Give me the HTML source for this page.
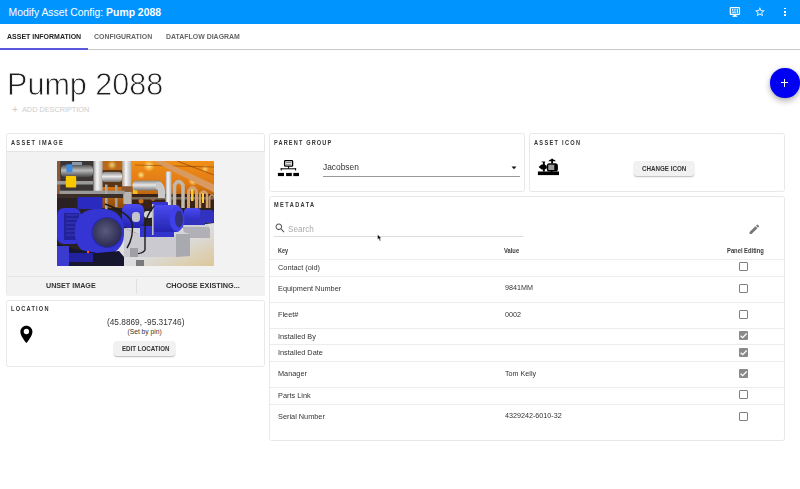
<!DOCTYPE html>
<html><head><meta charset="utf-8">
<style>
*{margin:0;padding:0;box-sizing:border-box}
html,body{width:800px;height:489px;overflow:hidden;background:#fff;font-family:"Liberation Sans",sans-serif;position:relative}
.a{position:absolute;white-space:nowrap;line-height:1}
.card{position:absolute;border:1px solid #e8e8e8;border-radius:2.5px;background:#fff}
.btn{position:absolute;background:#f1f1f1;border-radius:3px;box-shadow:0 1px 1.5px rgba(0,0,0,.28)}
.hr{position:absolute;left:270px;width:514px;height:1px;background:#ececec}
.cb{position:absolute;left:739px;width:9.2px;height:9.2px;border:1.15px solid #808080;border-radius:1px}
.cbc{position:absolute;left:739px;width:9.2px;height:9.2px;background:#8a8a8a;border-radius:1px}
</style></head><body>
<div class="a" style="left:0px;top:0px;width:800px;height:24px;background:#0094ff;"></div>
<div class="a" style="left:8.5px;top:7.6px;font-size:10.4px;color:#fff;">Modify Asset Config: <b>Pump 2088</b></div>
<svg class="a" style="left:729px;top:6px" width="12" height="12" viewBox="0 0 12 12"><rect x="1.3" y="1.7" width="9.2" height="6.6" rx="0.6" fill="none" stroke="#fff" stroke-width="1.2"/><rect x="3" y="3.2" width="1.4" height="1.4" fill="#fff"/><rect x="5.2" y="3.2" width="1.4" height="1.4" fill="#fff"/><rect x="7.8" y="3" width="1.2" height="4" fill="#fff"/><rect x="2.8" y="5.6" width="4.2" height="1.1" fill="#fff"/><rect x="4.5" y="8.6" width="2.8" height="1.6" fill="#fff"/><rect x="3.5" y="9.8" width="4.8" height="1" fill="#fff"/></svg>
<svg class="a" style="left:754px;top:6.3px" width="11.8" height="11.8" viewBox="0 0 24 24"><path fill="#fff" d="M22 9.24l-7.19-.62L12 2 9.19 8.63 2 9.24l5.46 4.73L5.82 21 12 17.27 18.18 21l-1.63-7.03L22 9.24zM12 15.4l-3.76 2.27 1-4.28-3.32-2.88 4.38-.38L12 6.1l1.71 4.04 4.38.38-3.32 2.88 1 4.28L12 15.4z"/></svg>
<div class="a" style="left:784px;top:7.7px;width:2px;height:1.8px;background:#fff;"></div>
<div class="a" style="left:784px;top:10.9px;width:2px;height:1.8px;background:#fff;"></div>
<div class="a" style="left:784px;top:14.1px;width:2px;height:1.8px;background:#fff;"></div>
<div class="a" style="left:0px;top:49px;width:800px;height:1px;background:#c8c8c8;"></div>
<div class="a" style="left:0px;top:48px;width:88px;height:2px;background:#5a58dc;"></div>
<div class="a" style="left:7px;top:33px;font-size:7.2px;color:#222;font-weight:bold;transform:scaleX(0.974);transform-origin:0 0;">ASSET INFORMATION</div>
<div class="a" style="left:94.4px;top:33px;font-size:7.2px;color:#666;font-weight:bold;transform:scaleX(0.968);transform-origin:0 0;">CONFIGURATION</div>
<div class="a" style="left:166px;top:33px;font-size:7.2px;color:#666;font-weight:bold;transform:scaleX(0.967);transform-origin:0 0;">DATAFLOW DIAGRAM</div>
<div class="a" style="left:7.3px;top:67.6px;font-size:32px;color:#1e1e1e;transform:scaleX(0.955);transform-origin:0 0;-webkit-text-stroke:0.8px #fff;paint-order:normal;">Pump 2088</div>
<div class="a" style="left:12px;top:104px;font-size:7.3px;color:#ccc;"><span style="font-size:10px;position:relative;top:1px">+</span></div>
<div class="a" style="left:22px;top:105.5px;font-size:7.3px;color:#ccc;">ADD DESCRIPTION</div>
<div class="a" style="left:770px;top:68px;width:29.5px;height:29.5px;background:#0000f2;border-radius:50%;box-shadow:0 3px 6px rgba(0,0,0,.3),0 0 3px rgba(0,0,0,.12)"></div>
<div class="a" style="left:780.8px;top:82.2px;width:7.4px;height:1.1px;background:#fff;"></div>
<div class="a" style="left:783.95px;top:79px;width:1.1px;height:7.7px;background:#fff;"></div>
<div class="card" style="left:6px;top:133px;width:259px;height:163px"></div>
<div class="a" style="left:6.5px;top:151px;width:258.5px;height:144.6px;background:#f2f2f2;border-top:1px solid #e4e4e4;border-radius:0 0 2px 2px"></div>
<div class="a" style="left:7px;top:276px;width:257px;height:1px;background:#e6e6e6;"></div>
<div class="a" style="left:136px;top:279px;width:1px;height:15px;background:#e0e0e0;"></div>
<div class="a" style="left:11px;top:139.7px;font-size:6.6px;color:#333;font-weight:bold;letter-spacing:1.53px;transform:scaleX(0.85);transform-origin:0 0;">ASSET IMAGE</div>
<div class="a" style="left:57px;top:161px;width:157px;height:105px;overflow:hidden"><svg width="157" height="105" viewBox="0 0 157 105"><defs><filter id="bl" x="-5%" y="-5%" width="110%" height="110%"><feGaussianBlur stdDeviation="0.5"/></filter><radialGradient id="lt1" cx="0.5" cy="0.5" r="0.5"><stop offset="0" stop-color="#fff0a0"/><stop offset="1" stop-color="#ffd060" stop-opacity="0"/></radialGradient><linearGradient id="ceil" x1="0" y1="0" x2="1" y2="0.6"><stop offset="0" stop-color="#c05a08"/><stop offset="0.45" stop-color="#f0901a"/><stop offset="1" stop-color="#f8a020"/></linearGradient><linearGradient id="pipeV" x1="0" y1="0" x2="1" y2="0"><stop offset="0" stop-color="#a0a0a0"/><stop offset="0.4" stop-color="#f6f6f6"/><stop offset="1" stop-color="#b0b0b0"/></linearGradient><linearGradient id="pipeH" x1="0" y1="0" x2="0" y2="1"><stop offset="0" stop-color="#555"/><stop offset="0.45" stop-color="#b8b8b8"/><stop offset="1" stop-color="#484848"/></linearGradient><radialGradient id="fan" cx="0.45" cy="0.45" r="0.6"><stop offset="0" stop-color="#5a5a7a"/><stop offset="1" stop-color="#262650"/></radialGradient><linearGradient id="floor" x1="0" y1="0" x2="1" y2="1"><stop offset="0" stop-color="#e4e4ea"/><stop offset="0.55" stop-color="#dcdcde"/><stop offset="1" stop-color="#dcc898"/></linearGradient><linearGradient id="mot" x1="0" y1="0" x2="0" y2="1"><stop offset="0" stop-color="#4a4af0"/><stop offset="1" stop-color="#2424b0"/></linearGradient><linearGradient id="ceilV" x1="0" y1="0" x2="0" y2="1"><stop offset="0" stop-color="#f09018"/><stop offset="0.5" stop-color="#e07810"/><stop offset="1" stop-color="#8a4a10"/></linearGradient><linearGradient id="pipeH2" x1="0" y1="0" x2="0" y2="1"><stop offset="0" stop-color="#8a8a8a"/><stop offset="0.45" stop-color="#e8e8e8"/><stop offset="1" stop-color="#7a7a7a"/></linearGradient></defs><g filter="url(#bl)"><rect x="0" y="0" width="157" height="105" fill="#2c2420"/><!-- ceiling orange --><rect x="44" y="0" width="113" height="47" fill="url(#ceilV)"/><rect x="45" y="0" width="20" height="26" fill="#5a3418"/><rect x="45" y="0" width="20" height="9" fill="#b86818"/><circle cx="55" cy="4" r="5" fill="url(#lt1)" opacity="0.8"/><circle cx="92" cy="5" r="6" fill="url(#lt1)"/><circle cx="84" cy="14" r="4" fill="url(#lt1)"/><circle cx="136" cy="20" r="5" fill="url(#lt1)"/><circle cx="148" cy="8" r="4" fill="url(#lt1)" opacity="0.8"/><path d="M78,4 L157,6" stroke="#8a4008" stroke-width="1" opacity="0.6"/><path d="M120,0 L157,14" stroke="#8a4008" stroke-width="1.2" opacity="0.6"/><polygon points="96,0 106,0 158,24 158,32" fill="#d89a60"/><!-- top-left industrial --><rect x="0" y="0" width="44" height="36" fill="#3a3634"/><rect x="15" y="1" width="10" height="6" fill="#8a98a8"/><rect x="0" y="0" width="3.3" height="36" fill="#8a5a3a"/><rect x="4" y="4" width="32" height="12" rx="4" fill="url(#pipeH)"/><rect x="0" y="20" width="36" height="3.5" fill="#9a9a9a"/><rect x="9.4" y="3.3" width="6" height="8" fill="#3c8ae0"/><rect x="8.8" y="15" width="10.4" height="11.6" rx="1" fill="#f8c800"/><rect x="36.4" y="0" width="9.2" height="37" fill="url(#pipeV)"/><rect x="45" y="11" width="20" height="10" rx="3" fill="url(#pipeH2)"/><rect x="65.2" y="0" width="9.2" height="25.4" fill="url(#pipeV)"/><rect x="64.5" y="25.4" width="11" height="5.5" fill="#8a5a38"/><rect x="66.4" y="31" width="8" height="12" fill="#b8b4b0"/><rect x="76" y="26" width="4.5" height="7" fill="#f0c020"/><!-- lower dark band right --><rect x="75" y="33" width="82" height="14" fill="#3a2212"/><circle cx="84" cy="40" r="2.5" fill="#e07818" opacity="0.9"/><circle cx="96" cy="38" r="2" fill="#e07818" opacity="0.8"/><rect x="75" y="36" width="82" height="2.5" fill="#7a6a5a"/><!-- orange section pipes --><rect x="75.5" y="19.5" width="30" height="10" rx="4.5" fill="url(#pipeH2)"/><path d="M99,24.5 Q104.5,24.5 104.5,30 L104.5,37" fill="none" stroke="#c8c8c8" stroke-width="7"/><rect x="108.5" y="10.5" width="6" height="35" fill="url(#pipeV)"/><path d="M117.5,47 L117.5,24 Q121.5,17 126,24 L126,47" fill="none" stroke="#c0b8b0" stroke-width="3.5"/><path d="M131.5,47 L131.5,30 Q135.5,23 139.5,30 L139.5,47" fill="none" stroke="#d0a070" stroke-width="3"/><path d="M143,47 L143,33 Q146.5,28 150,33 L150,47" fill="none" stroke="#d0a070" stroke-width="2.5"/><path d="M152.5,47 L152.5,36 Q155,32 157.5,36" fill="none" stroke="#c09060" stroke-width="2"/><rect x="134" y="28" width="2.5" height="12" fill="#f8d040"/><rect x="145" y="32" width="2" height="10" fill="#f8d040"/><!-- rail --><rect x="2.7" y="29.7" width="65" height="3.6" fill="#9a9898"/><rect x="48" y="23.5" width="2.5" height="25" fill="#a8a8a8"/><rect x="58" y="24" width="2.5" height="22" fill="#a0a0a0"/><rect x="0" y="33" width="66" height="4" fill="#3a2e28"/><!-- floor --><polygon points="55,76 157,62 157,105 55,105" fill="url(#floor)"/><!-- top dark band across motors --><!-- far right motors + bases --><polygon points="125,63 150,63 153,68 153,77 128,77" fill="#b0b0b6"/><polygon points="125,63 150,63 152,66 127,66" fill="#d0d0d4"/><rect x="127" y="47" width="17" height="17" rx="4" fill="url(#mot)"/><rect x="143" y="49" width="14" height="13" rx="3" fill="#3232c0"/><rect x="126" y="59" width="22" height="5" fill="#3030c0"/><!-- middle concrete base --><polygon points="67,67 114,67 133,73 84,74" fill="#d4d4d8"/><polygon points="67,67 84,74 119,74 119,96 67,96" fill="#cacad0"/><polygon points="119,73 133,73 133,95 119,96" fill="#a9a9b0"/><!-- middle left pump --><rect x="65" y="43" width="22" height="24" rx="6" fill="url(#mot)"/><rect x="75" y="51" width="8" height="10" rx="3.5" fill="#c4c4cc"/><!-- middle motor --><rect x="95" y="41" width="16" height="7.5" rx="1" fill="#3434cc"/><rect x="83" y="65" width="34" height="11" fill="#3030cc"/><rect x="95" y="44" width="28" height="27" rx="4" fill="url(#mot)"/><ellipse cx="120" cy="58" rx="7.5" ry="12.5" fill="#4040ea"/><ellipse cx="122" cy="58" rx="4" ry="8.5" fill="#30307a"/><rect x="87" y="50" width="9" height="7" rx="3" fill="#d0d0d6"/><rect x="95" y="43" width="1.6" height="31" fill="#c0c0c0"/><!-- big motor --><rect x="20.5" y="36" width="25" height="12" rx="1.5" fill="#2c2cc0"/><rect x="0" y="47" width="24" height="36" rx="7" fill="#3434d8"/><rect x="7" y="52" width="15" height="27" fill="#22229a"/><path d="M9,54 H21 M9,58 H21 M9,62 H21 M9,66 H21 M9,70 H21 M9,74 H21" stroke="#3a3ac0" stroke-width="1"/><rect x="18" y="48" width="49" height="46" rx="20" fill="#3434d4"/><circle cx="50" cy="71.5" r="15" fill="url(#fan)"/><circle cx="50" cy="71.5" r="15" fill="none" stroke="#2a2ab8" stroke-width="1.2"/><!-- base dark --><polygon points="0,83 18,88 40,92 62,90 67,96 67,105 0,105" fill="#14142e"/><rect x="0" y="85" width="12" height="20" fill="#3a3ad0"/><rect x="12" y="92" width="24" height="9" fill="#2222a0"/><circle cx="31" cy="91" r="1.2" fill="#ff6020"/><!-- hoses --><path d="M48,43 Q72,52 75,62 Q77,76 70,87" fill="none" stroke="#1e1e1e" stroke-width="1.4"/><path d="M97,45 Q88,56 88,68 Q88,82 88,89 Q86,93 76,93" fill="none" stroke="#1e1e1e" stroke-width="1.4"/><rect x="73" y="87" width="8" height="9" fill="#a0a0a4"/><rect x="79" y="99" width="8" height="6" fill="#7a7a7e"/></g></svg></div>
<div class="a" style="left:46.4px;top:282px;font-size:7.6px;color:#333;font-weight:bold;transform:scaleX(0.942);transform-origin:0 0;">UNSET IMAGE</div>
<div class="a" style="left:165.6px;top:282px;font-size:7.6px;color:#333;font-weight:bold;transform:scaleX(0.961);transform-origin:0 0;">CHOOSE EXISTING...</div>
<div class="card" style="left:6px;top:300px;width:259px;height:67px"></div>
<div class="a" style="left:11px;top:306.3px;font-size:6.6px;color:#333;font-weight:bold;letter-spacing:1.45px;transform:scaleX(0.85);transform-origin:0 0;">LOCATION</div>
<svg class="a" style="left:15.7px;top:323.5px" width="20.8" height="20.8" viewBox="0 0 24 24"><path fill="#000" fill-rule="evenodd" d="M12 2C8.13 2 5 5.13 5 9c0 5.25 7 13 7 13s7-7.75 7-13c0-3.87-3.13-7-7-7zM12 5.6A3.1 3.1 0 1 0 12 11.8A3.1 3.1 0 1 0 12 5.6z"/></svg>
<div class="a" style="left:106.5px;top:317.5px;font-size:8.5px;color:#333;transform:scaleX(0.975);transform-origin:0 0;">(45.8869, -95.31746)</div>
<div class="a" style="left:127.5px;top:328.8px;font-size:6.7px;color:#333;">(Set by pin)</div>
<div class="btn" style="left:114.4px;top:341.2px;width:60.8px;height:14.8px"></div>
<div class="a" style="left:121.9px;top:345px;font-size:7px;color:#333;font-weight:bold;transform:scaleX(0.879);transform-origin:0 0;">EDIT LOCATION</div>
<div class="card" style="left:269px;top:133px;width:256px;height:59px"></div>
<div class="a" style="left:274px;top:139.7px;font-size:6.6px;color:#333;font-weight:bold;letter-spacing:1.34px;transform:scaleX(0.85);transform-origin:0 0;">PARENT GROUP</div>
<svg class="a" style="left:276px;top:158px" width="25" height="20" viewBox="0 0 25 20"><rect x="8.6" y="2.6" width="8" height="5.6" rx="0.8" fill="none" stroke="#000" stroke-width="1.3"/><rect x="9.8" y="4" width="5.6" height="0.9" fill="#777"/><rect x="9.8" y="5.8" width="5.6" height="0.9" fill="#777"/><rect x="12.1" y="8" width="1" height="2.6" fill="#000"/><rect x="4.7" y="10.3" width="15.4" height="1" fill="#000"/><rect x="4.7" y="10.3" width="1" height="2.2" fill="#000"/><rect x="19.1" y="10.3" width="1" height="2.2" fill="#000"/><rect x="1.9" y="14.9" width="6.1" height="3.2" fill="#000"/><rect x="10.1" y="14.9" width="5.7" height="3.2" fill="#000"/><rect x="17.3" y="14.9" width="5.7" height="3.2" fill="#000"/></svg>
<div class="a" style="left:323px;top:163.3px;font-size:8.8px;color:#333;transform:scaleX(0.953);transform-origin:0 0;">Jacobsen</div>
<div class="a" style="left:323px;top:175.5px;width:197px;height:1px;background:#999;"></div>
<svg class="a" style="left:511px;top:165.5px" width="6" height="4" viewBox="0 0 6 4"><path d="M0.5 0.6 L5.5 0.6 L3 3.2 Z" fill="#111"/></svg>
<div class="card" style="left:529px;top:133px;width:256px;height:59px"></div>
<div class="a" style="left:534px;top:139.7px;font-size:6.6px;color:#333;font-weight:bold;letter-spacing:1.53px;transform:scaleX(0.85);transform-origin:0 0;">ASSET ICON</div>
<svg class="a" style="left:536px;top:157px" width="24" height="20" viewBox="0 0 24 20"><rect x="1.9" y="14.5" width="21.1" height="3.6" fill="#000"/><rect x="10.8" y="6.2" width="11.1" height="8.3" rx="2.6" fill="#000"/><rect x="12.3" y="7.7" width="6" height="5.3" fill="#9a9a9a"/><rect x="14.9" y="13.6" width="1.6" height="1.5" fill="#000"/><path d="M12.3 4.2 L13.8 2.8 L15.2 2.6 L15.2 1.8 L17 1.8 L17 2.6 L18.4 2.8 L19.9 4.2 L17 4.2 L17 6.4 L15.2 6.4 L15.2 4.2 Z" fill="#000"/><path d="M2.6 10 L5.6 7.6 L6.9 7.6 L6.9 5.2 L5.6 5.2 L5.6 4.4 L9.2 4.4 L9.2 5.2 L8.8 5.2 L8.8 7.6 L10.8 9 L10.8 11.2 L8.8 12.6 L8.8 14.5 L6.9 14.5 L6.9 12.6 L5.6 12.6 Z" fill="#000"/></svg>
<div class="btn" style="left:634.3px;top:161.2px;width:59.5px;height:15px"></div>
<div class="a" style="left:642px;top:166px;font-size:6.8px;color:#333;font-weight:bold;transform:scaleX(0.917);transform-origin:0 0;">CHANGE ICON</div>
<div class="card" style="left:269px;top:196px;width:516px;height:245px"></div>
<div class="a" style="left:274px;top:202px;font-size:6.6px;color:#333;font-weight:bold;letter-spacing:1.67px;transform:scaleX(0.85);transform-origin:0 0;">METADATA</div>
<svg class="a" style="left:273.7px;top:221.9px" width="12.2" height="12.2" viewBox="0 0 24 24"><path fill="#555" d="M15.5 14h-.79l-.28-.27C15.41 12.59 16 11.11 16 9.5 16 5.91 13.09 3 9.5 3S3 5.91 3 9.5 5.91 16 9.5 16c1.61 0 3.09-.59 4.23-1.57l.27.28v.79l5 4.99L20.49 19l-4.99-5zm-6 0C7.01 14 5 11.99 5 9.5S7.01 5 9.5 5 14 7.01 14 9.5 11.99 14 9.5 14z"/></svg>
<svg class="a" style="left:748.2px;top:223px" width="12.7" height="12.7" viewBox="0 0 24 24"><path fill="#777" d="M3 17.25V21h3.75L17.81 9.94l-3.75-3.75L3 17.25zM20.71 7.04c.39-.39.39-1.02 0-1.41l-2.34-2.34c-.39-.39-1.02-.39-1.41 0l-1.83 1.83 3.75 3.75 1.83-1.83z"/></svg>
<div class="a" style="left:288.2px;top:224.8px;font-size:8.6px;color:#aaa;transform:scaleX(0.95);transform-origin:0 0;">Search</div>
<div class="a" style="left:274px;top:235.8px;width:249px;height:1.2px;background:#ddd;"></div>
<div class="a" style="left:277.9px;top:248.3px;font-size:6.3px;color:#3a3a3a;font-weight:bold;transform:scaleX(0.867);transform-origin:0 0;">Key</div>
<div class="a" style="left:504.2px;top:248.3px;font-size:6.3px;color:#3a3a3a;font-weight:bold;transform:scaleX(0.918);transform-origin:0 0;">Value</div>
<div class="a" style="left:726.8px;top:248.3px;font-size:6.3px;color:#3a3a3a;font-weight:bold;transform:scaleX(0.923);transform-origin:0 0;">Panel Editing</div>
<div class="hr" style="top:258.5px"></div>
<div class="hr" style="top:276px"></div>
<div class="hr" style="top:302px"></div>
<div class="hr" style="top:328.3px"></div>
<div class="hr" style="top:344px"></div>
<div class="hr" style="top:361.3px"></div>
<div class="hr" style="top:387.3px"></div>
<div class="hr" style="top:404.2px"></div>
<div class="a" style="left:278px;top:263.6px;font-size:7.9px;color:#333;transform:scaleX(0.93);transform-origin:0 0;">Contact (old)</div>
<div class="a" style="left:278px;top:284.8px;font-size:7.9px;color:#333;transform:scaleX(0.93);transform-origin:0 0;">Equipment Number</div>
<div class="a" style="left:278px;top:310.9px;font-size:7.9px;color:#333;transform:scaleX(0.93);transform-origin:0 0;">Fleet#</div>
<div class="a" style="left:278px;top:332.5px;font-size:7.9px;color:#333;transform:scaleX(0.93);transform-origin:0 0;">Installed By</div>
<div class="a" style="left:278px;top:349.2px;font-size:7.9px;color:#333;transform:scaleX(0.93);transform-origin:0 0;">Installed Date</div>
<div class="a" style="left:278px;top:370.3px;font-size:7.9px;color:#333;transform:scaleX(0.93);transform-origin:0 0;">Manager</div>
<div class="a" style="left:278px;top:391.5px;font-size:7.9px;color:#333;transform:scaleX(0.93);transform-origin:0 0;">Parts Link</div>
<div class="a" style="left:278px;top:413.2px;font-size:7.9px;color:#333;transform:scaleX(0.93);transform-origin:0 0;">Serial Number</div>
<div class="a" style="left:505px;top:284.3px;font-size:7.9px;color:#333;transform:scaleX(0.91);transform-origin:0 0;">9841MM</div>
<div class="a" style="left:505px;top:310.6px;font-size:7.9px;color:#333;transform:scaleX(0.91);transform-origin:0 0;">0002</div>
<div class="a" style="left:505px;top:369.8px;font-size:7.9px;color:#333;transform:scaleX(0.91);transform-origin:0 0;">Tom Kelly</div>
<div class="a" style="left:505px;top:412.3px;font-size:7.9px;color:#333;transform:scaleX(0.91);transform-origin:0 0;">4329242-6010-32</div>
<div class="cb" style="top:262.3px"></div>
<div class="cb" style="top:283.7px"></div>
<div class="cb" style="top:310px"></div>
<div class="cbc" style="top:331.2px"><svg width="9.2" height="9.2" viewBox="0 0 9 9" style="display:block"><path d="M1.6 4.6 L3.6 6.5 L7.5 2.5" fill="none" stroke="#fff" stroke-width="1.2"/></svg></div>
<div class="cbc" style="top:347.8px"><svg width="9.2" height="9.2" viewBox="0 0 9 9" style="display:block"><path d="M1.6 4.6 L3.6 6.5 L7.5 2.5" fill="none" stroke="#fff" stroke-width="1.2"/></svg></div>
<div class="cbc" style="top:369.3px"><svg width="9.2" height="9.2" viewBox="0 0 9 9" style="display:block"><path d="M1.6 4.6 L3.6 6.5 L7.5 2.5" fill="none" stroke="#fff" stroke-width="1.2"/></svg></div>
<div class="cb" style="top:390px"></div>
<div class="cb" style="top:412px"></div>
<svg class="a" style="left:377px;top:233.8px" width="6" height="8" viewBox="0 0 6 8"><path d="M0.6 0.4 L0.6 5.6 L1.8 4.6 L2.9 7 L3.8 6.6 L2.8 4.3 L4.4 4.2 Z" fill="#000" stroke="#fff" stroke-width="0.4"/></svg>
</body></html>
